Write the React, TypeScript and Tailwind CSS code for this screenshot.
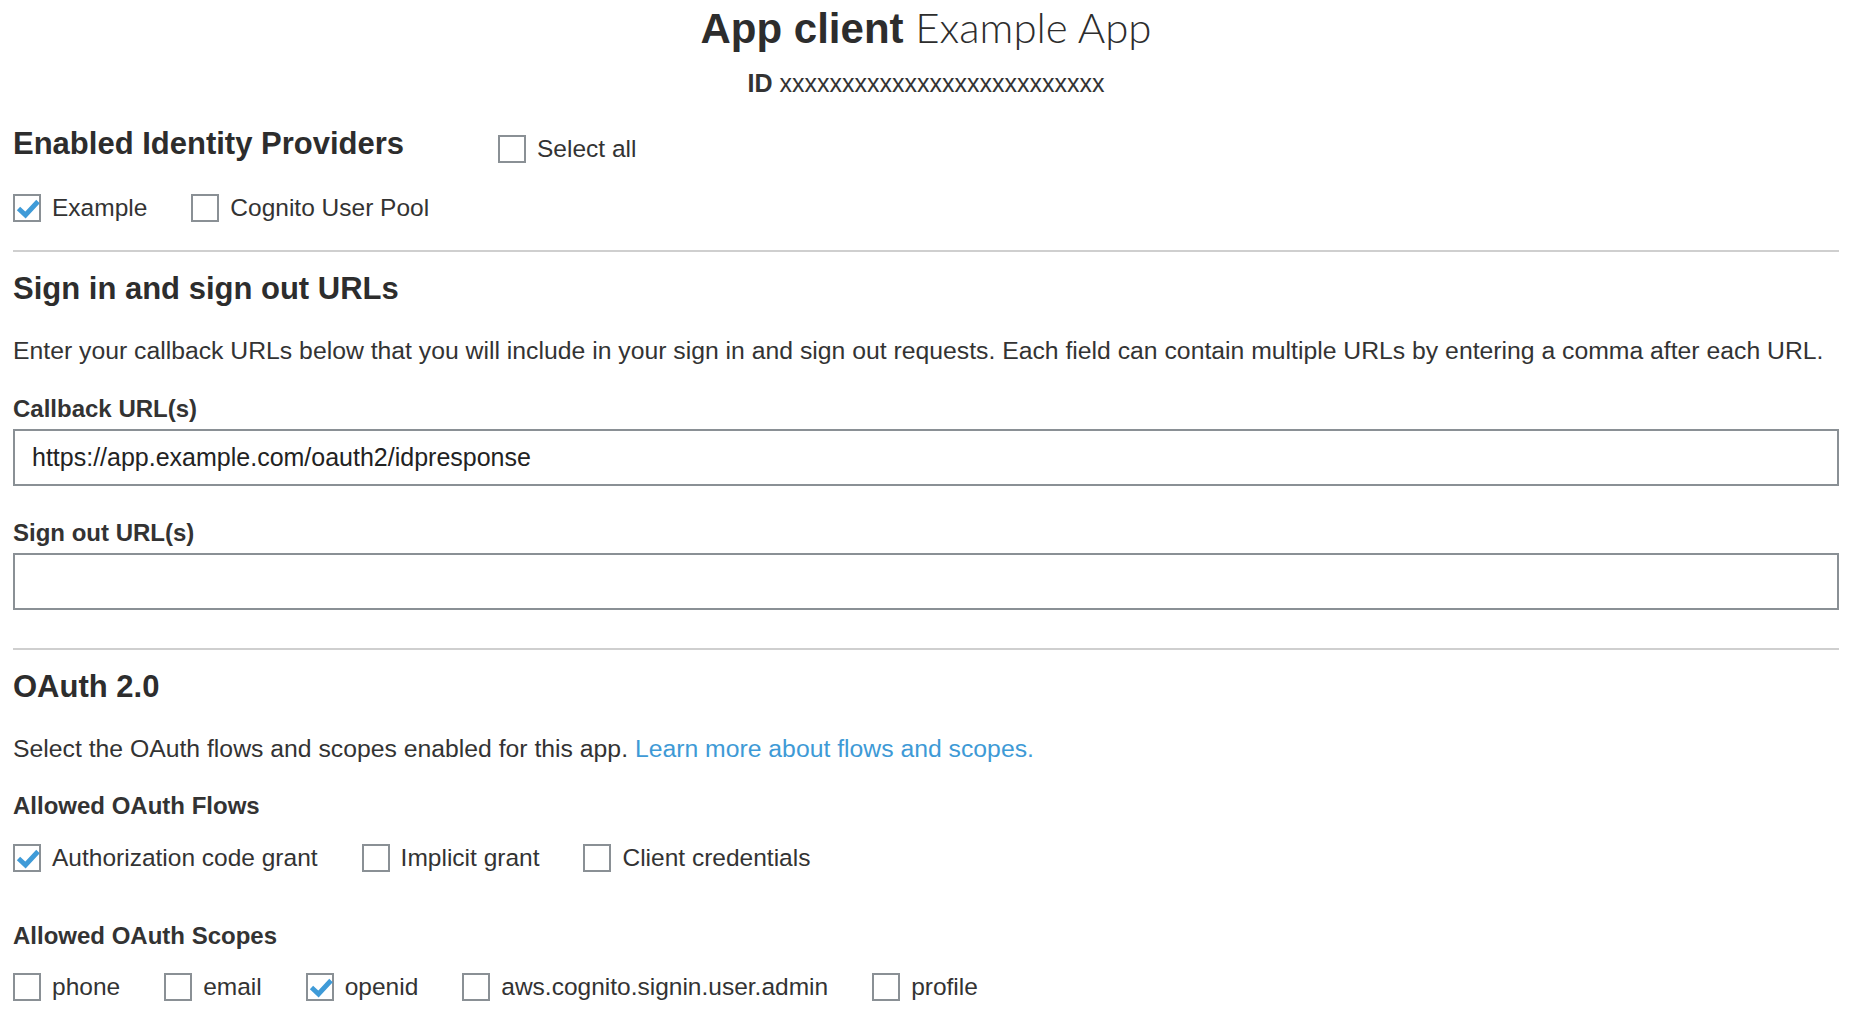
import React from "react";

type CheckProps = { label: string; checked?: boolean };

function Check({ label, checked }: CheckProps) {
  return (
    <label className="flex items-center">
      <span className="relative w-[28px] h-[28px] border-2 border-[#8a9095] bg-white shrink-0">
        {checked && (
          <svg
            className="absolute -left-[2px] -top-[2px] overflow-visible"
            width="28"
            height="28"
            viewBox="0 0 28 28"
          >
            <path
              d="M5.5 14.5 L12.5 21 L25 7.5"
              fill="none"
              stroke="#3f9bd8"
              strokeWidth="4.8"
              strokeLinejoin="miter"
            />
          </svg>
        )}
      </span>
      <span className="ml-[11px] text-[24.5px] leading-[30px] text-[#333] whitespace-nowrap">
        {label}
      </span>
    </label>
  );
}

function Field({ label, value }: { label: string; value?: string }) {
  return (
    <>
      <div className="text-[24px] leading-[30px] font-bold text-[#333]">
        {label}
      </div>
      <div className="mt-[5px] h-[57px] border-2 border-[#8a9095] flex items-center pl-[17px] text-[25px] text-[#222]">
        {value}
      </div>
    </>
  );
}

function App() {
  return (
    <div className="w-[1874px] min-h-[1029px] bg-white pl-[13px] pr-[35px] font-['Liberation_Sans',Arial,sans-serif] text-[#333]">
      <div className="text-center">
        <h1 className="text-[42px] leading-[54px] text-[#2d2d2d]">
          <span className="font-bold">App client</span>{" "}
          <span className="font-['Lato',sans-serif] font-light">Example App</span>
        </h1>
        <p className="mt-[12px] text-[25px] leading-[30px]">
          <span className="font-bold">ID</span> xxxxxxxxxxxxxxxxxxxxxxxxxx
        </p>
      </div>

      <div className="mt-[26px] h-[40px] flex items-center">
        <h2 className="w-[485px] text-[31px] font-bold text-[#2d2d2d]">
          Enabled Identity Providers
        </h2>
        <div className="mt-[10px]">
          <Check label="Select all" />
        </div>
      </div>
      <div className="mt-[29px] flex gap-[44px]">
        <Check label="Example" checked />
        <Check label="Cognito User Pool" />
      </div>

      <hr className="mt-[27px] border-0 h-[2px] bg-[#cfcfcf]" />

      <h2 className="mt-[18px] text-[31px] leading-[38px] font-bold text-[#2d2d2d]">
        Sign in and sign out URLs
      </h2>
      <p className="mt-[28px] text-[24.75px] leading-[30px] whitespace-nowrap">
        Enter your callback URLs below that you will include in your sign in and
        sign out requests. Each field can contain multiple URLs by entering a
        comma after each URL.
      </p>
      <div className="mt-[28px]">
        <Field
          label="Callback URL(s)"
          value="https://app.example.com/oauth2/idpresponse"
        />
      </div>
      <div className="mt-[32px]">
        <Field label="Sign out URL(s)" />
      </div>

      <hr className="mt-[38px] border-0 h-[2px] bg-[#cfcfcf]" />

      <h2 className="mt-[18px] text-[31px] leading-[38px] font-bold text-[#2d2d2d]">
        OAuth 2.0
      </h2>
      <p className="mt-[28px] text-[24.75px] leading-[30px]">
        Select the OAuth flows and scopes enabled for this app.{" "}
        <a className="text-[#3e9ad6]" href="#">
          Learn more about flows and scopes.
        </a>
      </p>

      <div className="mt-[27px] text-[24px] leading-[30px] font-bold">
        Allowed OAuth Flows
      </div>
      <div className="mt-[22px] flex gap-[44px]">
        <Check label="Authorization code grant" checked />
        <Check label="Implicit grant" />
        <Check label="Client credentials" />
      </div>

      <div className="mt-[48px] text-[24px] leading-[30px] font-bold">
        Allowed OAuth Scopes
      </div>
      <div className="mt-[21px] flex gap-[44px]">
        <Check label="phone" />
        <Check label="email" />
        <Check label="openid" checked />
        <Check label="aws.cognito.signin.user.admin" />
        <Check label="profile" />
      </div>
    </div>
  );
}

export default App;
